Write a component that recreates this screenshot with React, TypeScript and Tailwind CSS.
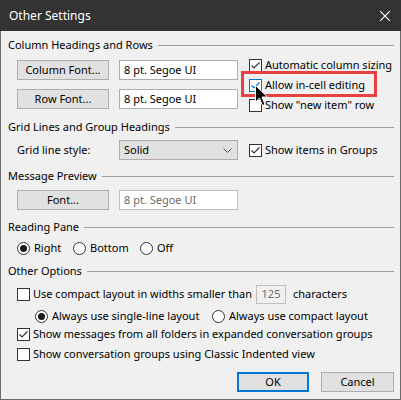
import React from 'react';

const font = { fontFamily: '"Noto Sans", "Liberation Sans", sans-serif' };

function Check({ checked = false, hover = false }: { checked?: boolean; hover?: boolean }) {
  return (
    <span
      className={`w-[13px] h-[13px] shrink-0 bg-white border flex items-center justify-center ${
        hover ? 'border-[#0078d7]' : 'border-[#333333]'
      }`}
    >
      {checked && (
        <svg width="11" height="11" viewBox="0 0 11 11">
          <path
            d="M1.5 5.5 L4 8 L9.5 2.5"
            fill="none"
            stroke={hover ? '#0078d7' : '#333333'}
            strokeWidth="1.2"
          />
        </svg>
      )}
    </span>
  );
}

function Radio({ checked = false }: { checked?: boolean }) {
  return (
    <span className="w-[13px] h-[13px] shrink-0 rounded-full bg-white border border-[#333333] flex items-center justify-center">
      {checked && <span className="w-[7px] h-[7px] rounded-full bg-[#1a1a1a]" />}
    </span>
  );
}

function GroupHeader({ label, className = '' }: { label: string; className?: string }) {
  return (
    <div className={`h-4 flex items-center gap-[5px] ${className}`}>
      <span className="whitespace-nowrap">{label}</span>
      <span className="flex-1 h-px bg-[#a0a0a0]" />
    </div>
  );
}

function Button({ label, primary = false, className = '' }: { label: string; primary?: boolean; className?: string }) {
  return (
    <div
      className={`h-5 flex items-center justify-center bg-[#e1e1e1] ${
        primary ? 'border-2 border-[#0078d7]' : 'border border-[#adadad]'
      } ${className}`}
    >
      {label}
    </div>
  );
}

function TextBox({ value, disabled = false }: { value: string; disabled?: boolean }) {
  return (
    <div
      className={`w-[119px] h-5 flex items-center pl-[4px] bg-white border ${
        disabled ? 'border-[#bfbfbf] text-[#6d6d6d]' : 'border-[#adadad]'
      }`}
    >
      {value}
    </div>
  );
}

function CheckRow({ label, checked, hover }: { label: string; checked?: boolean; hover?: boolean }) {
  return (
    <div className="h-5 flex items-center gap-[3px] whitespace-nowrap">
      <Check checked={checked} hover={hover} />
      <span>{label}</span>
    </div>
  );
}

export default function App() {
  return (
    <div className="w-[401px] h-[400px] flex flex-col text-[11px] text-black relative" style={font}>
      <div className="h-[31px] shrink-0 bg-[#333333] flex items-center justify-between pl-[9px] pr-[11px]">
        <span className="text-white text-[12px]">Other Settings</span>
        <svg width="10" height="10" viewBox="0 0 10 10">
          <path d="M0 0 L10 10 M10 0 L0 10" stroke="#ffffff" strokeWidth="1.1" />
        </svg>
      </div>

      <div className="flex-1 bg-[#f0f0f0] border-x border-b border-[#6b6b6b] pl-[7px] pr-[6px] flex flex-col">
        <GroupHeader label="Column Headings and Rows" className="mt-[6px]" />
        <div className="flex pl-[9px]">
          <div className="flex flex-col gap-[9px] mt-[7px]">
            <div className="flex gap-[10px]">
              <Button label="Column Font..." className="w-[92px]" />
              <TextBox value="8 pt. Segoe UI" />
            </div>
            <div className="flex gap-[10px]">
              <Button label="Row Font..." className="w-[92px]" />
              <TextBox value="8 pt. Segoe UI" />
            </div>
          </div>
          <div className="flex flex-col ml-[11px] mt-[2px]">
            <CheckRow label="Automatic column sizing" checked />
            <CheckRow label="Allow in-cell editing" checked hover />
            <CheckRow label={'Show "new item" row'} />
          </div>
        </div>

        <GroupHeader label="Grid Lines and Group Headings" className="mt-[4px]" />
        <div className="flex items-center mt-[5px] pl-[9px]">
          <span className="w-[102px]">Grid line style:</span>
          <div className="w-[119px] h-5 flex items-center justify-between pl-[4px] pr-[5px] bg-[#e1e1e1] border border-[#adadad]">
            <span>Solid</span>
            <svg width="9" height="5" viewBox="0 0 9 5">
              <path d="M0.5 0.5 L4.5 4.5 L8.5 0.5" fill="none" stroke="#555555" strokeWidth="1" />
            </svg>
          </div>
          <div className="ml-[11px]">
            <CheckRow label="Show items in Groups" checked />
          </div>
        </div>

        <GroupHeader label="Message Preview" className="mt-[8px]" />
        <div className="flex gap-[10px] mt-[6px] pl-[9px]">
          <Button label="Font..." className="w-[92px]" />
          <TextBox value="8 pt. Segoe UI" disabled />
        </div>

        <GroupHeader label="Reading Pane" className="mt-[9px]" />
        <div className="h-4 flex items-center mt-[5px] pl-[9px] whitespace-nowrap">
          <div className="flex items-center gap-[4px] w-[56px]">
            <Radio checked />
            <span>Right</span>
          </div>
          <div className="flex items-center gap-[4px] w-[67px]">
            <Radio />
            <span>Bottom</span>
          </div>
          <div className="flex items-center gap-[4px]">
            <Radio />
            <span>Off</span>
          </div>
        </div>

        <GroupHeader label="Other Options" className="mt-[7px]" />
        <div className="h-5 flex items-center mt-[5px] pl-[9px] whitespace-nowrap">
          <Check />
          <span className="ml-[3px] w-[223px]">Use compact layout in widths smaller than</span>
          <div className="w-[30px] h-[19px] flex items-center justify-center border border-[#bfbfbf] text-[#6d6d6d] bg-[#f0f0f0]">
            125
          </div>
          <span className="ml-[7px]">characters</span>
        </div>
        <div className="h-4 flex items-center mt-[4px] pl-[27px] whitespace-nowrap">
          <div className="flex items-center gap-[4px] w-[177px]">
            <Radio checked />
            <span>Always use single-line layout</span>
          </div>
          <div className="flex items-center gap-[4px]">
            <Radio />
            <span>Always use compact layout</span>
          </div>
        </div>
        <div className="pl-[9px]">
          <CheckRow label="Show messages from all folders in expanded conversation groups" checked />
        </div>
        <div className="pl-[9px]">
          <CheckRow label="Show conversation groups using Classic Indented view" />
        </div>

        <div className="flex justify-end gap-[12px] mt-[8px]">
          <Button label="OK" primary className="w-[72px]" />
          <Button label="Cancel" className="w-[73px]" />
        </div>
      </div>

      <div className="absolute left-[241px] top-[71px] w-[136px] h-[26px] border-[3px] border-[#e8403f]" />
      <svg className="absolute left-[255px] top-[85px]" width="13" height="22" viewBox="0 0 13 22">
        <path
          d="M0.5 0.5 L0.5 17 L4.5 13 L7.5 20.5 L10 19.5 L7 12 L12.5 12 Z"
          fill="#000000"
          stroke="#ffffff"
          strokeWidth="1"
        />
      </svg>
    </div>
  );
}
